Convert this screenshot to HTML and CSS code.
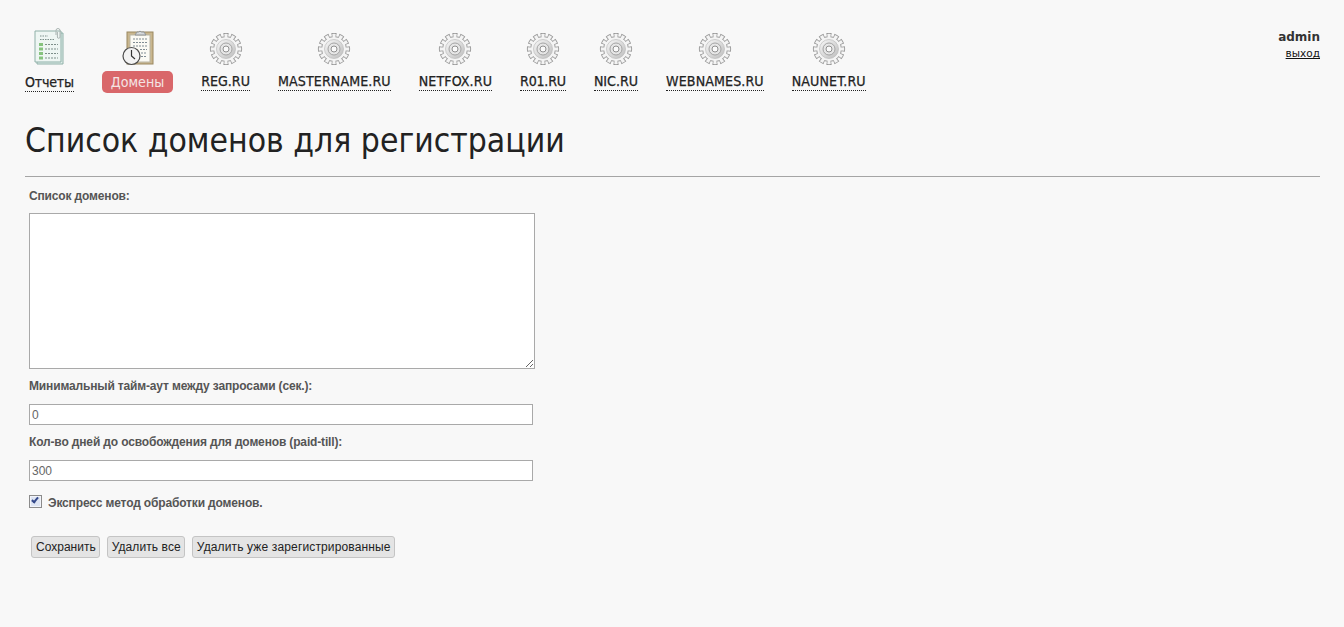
FILE: index.html
```html
<!DOCTYPE html>
<html lang="ru">
<head>
<meta charset="utf-8">
<title>Список доменов для регистрации</title>
<link rel="stylesheet" href="styles.css">
</head>
<body>
<svg class="defs" width="0" height="0" aria-hidden="true">
  <defs>
    <linearGradient id="gearFill" x1="0" y1="0" x2="1" y2="1">
      <stop offset="0" stop-color="#f8f8f8"/>
      <stop offset="1" stop-color="#bdbdbd"/>
    </linearGradient>
    <symbol id="gear" viewBox="0 0 34 34">
      <circle cx="17" cy="17" r="13" fill="none" stroke="#989898" stroke-width="6.200" stroke-dasharray="6.600 3.400" pathLength="120" stroke-dashoffset="3.300"/>
      <circle cx="17" cy="17" r="12.500" fill="#f4f4f4" stroke="#9c9c9c" stroke-width="1"/>
      <circle cx="17" cy="17" r="12.700" fill="none" stroke="#f4f4f4" stroke-width="5" stroke-dasharray="4.600 5.400" pathLength="120" stroke-dashoffset="2.300"/>
      <circle cx="17" cy="17" r="9.500" fill="url(#gearFill)" stroke="#bcbcbc" stroke-width=".7"/>
      <circle cx="17" cy="17" r="6" fill="#e6e6e6" stroke="#a4a4a4" stroke-width="1"/>
      <circle cx="17" cy="17" r="3" fill="#fafafa" stroke="#909090" stroke-width="1"/>
    </symbol>
  </defs>
</svg>

<header class="top">
  <nav class="nav">
    <a class="nav-item" href="#">
      <svg class="icon" viewBox="-2 0 34 38" aria-hidden="true">
        <path d="M3 5h26v31H3z" fill="#dfeeea" stroke="#8fb0a8"/>
        <path d="M1 3h26v31H1z" fill="#eef6f3" stroke="#8fb0a8"/>
        <path d="M6 8h8M6 11.500h14" stroke="#7d8f8a" stroke-dasharray="1.500 1"/>
        <g fill="#86c37e"><rect x="5" y="15" width="4" height="3"/><rect x="5" y="19.500" width="4" height="3"/><rect x="5" y="24" width="4" height="3"/><rect x="5" y="28.500" width="4" height="3"/></g>
        <path d="M11 16.500h13M11 21h13M11 25.500h13M11 30h13" stroke="#7d8f8a" stroke-dasharray="2 1"/>
        <path d="M22 7V2.500a2 2 0 0 1 4 0V9a1.300 1.300 0 0 1-2.600 0V4" fill="none" stroke="#a9b4b2"/>
      </svg>
      <span class="nav-label first-label">Отчеты</span>
    </a>
    <a class="nav-item active" href="#">
      <svg class="icon" viewBox="0 0 34 38" aria-hidden="true">
        <rect x="6" y="4" width="26" height="32" fill="#c9b68e" stroke="#9a8861"/>
        <rect x="9" y="7" width="20" height="27" fill="#fbfaf4" stroke="#b9b5a5"/>
        <path d="M14 7l2-3h1.500a2 2 0 0 1 3 0H23l2 3z" fill="#d5d8da" stroke="#8f9396"/>
        <path d="M12 11h14M12 14.500h14M12 18h14M19 21.500h7M20 25h6M20 28.500h6" stroke="#808c94" stroke-dasharray="2 1"/>
        <circle cx="10.500" cy="28" r="8.500" fill="#f3f3f3" stroke="#4b4b4b" stroke-width="1.200"/>
        <path d="M10.500 22v6l3.500 3" fill="none" stroke="#333" stroke-width="1.200"/>
      </svg>
      <span class="nav-label">Домены</span>
    </a>
    <a class="nav-item" href="#"><svg class="icon gear"><use href="#gear"/></svg><span class="nav-label">REG.RU</span></a>
    <a class="nav-item" href="#"><svg class="icon gear"><use href="#gear"/></svg><span class="nav-label spaced">MASTERNAME.RU</span></a>
    <a class="nav-item" href="#"><svg class="icon gear"><use href="#gear"/></svg><span class="nav-label spaced">NETFOX.RU</span></a>
    <a class="nav-item" href="#"><svg class="icon gear"><use href="#gear"/></svg><span class="nav-label tight">R01.RU</span></a>
    <a class="nav-item" href="#"><svg class="icon gear"><use href="#gear"/></svg><span class="nav-label">NIC.RU</span></a>
    <a class="nav-item" href="#"><svg class="icon gear"><use href="#gear"/></svg><span class="nav-label spaced">WEBNAMES.RU</span></a>
    <a class="nav-item" href="#"><svg class="icon gear"><use href="#gear"/></svg><span class="nav-label spaced">NAUNET.RU</span></a>
  </nav>
  <div class="user">
    <div class="user-name">admin</div>
    <a class="logout" href="#">выход</a>
  </div>
</header>

<h1 class="title">Список доменов для регистрации</h1>

<form class="form">
  <label class="label first" for="domains">Список доменов:</label>
  <textarea class="area" id="domains"></textarea>
  <label class="label" for="timeout">Минимальный тайм-аут между запросами (сек.):</label>
  <input class="field" id="timeout" type="text" value="0">
  <label class="label" for="days">Кол-во дней до освобождения для доменов (paid-till):</label>
  <input class="field" id="days" type="text" value="300">
  <label class="check">
    <input class="checkbox" type="checkbox" checked>
    <span>Экспресс метод обработки доменов.</span>
  </label>
  <div class="actions">
    <button class="btn" type="button">Сохранить</button>
    <button class="btn btn-mid" type="button">Удалить все</button>
    <button class="btn btn-wide" type="button">Удалить уже зарегистрированные</button>
  </div>
</form>
</body>
</html>
```
FILE: styles.css
```css
html, body {
  margin: 0;
  padding: 0;
  background: #f8f8f8;
  height: 100%;
}
body {
  font-family: "Liberation Sans", Arial, sans-serif;
  font-size: 12px;
  color: #222;
  padding: 0 24px 0 25px;
  box-sizing: border-box;
  overflow: hidden;
}
.defs {
  position: absolute;
}
.top {
  display: flex;
  justify-content: space-between;
  align-items: flex-start;
  padding-top: 28px;
}
.nav {
  display: flex;
  gap: 28px;
}
.nav-item {
  display: flex;
  flex-direction: column;
  align-items: center;
  color: #222;
  text-decoration: none;
}
.icon {
  width: 34px;
  height: 38px;
  display: block;
}
.gear {
  width: 34px;
  height: 34px;
  margin: 4px 0 0;
}
.nav-label {
  margin-top: 8px;
  height: 17px;
  line-height: 17px;
  font-family: "DejaVu Sans Condensed", "DejaVu Sans", sans-serif;
  font-stretch: condensed;
  font-size: 14.100px;
  font-weight: 400;
  -webkit-text-stroke: 0.25px #222;
  border-bottom: 1px dotted #222;
  white-space: nowrap;
}
.first-label {
  letter-spacing: -0.200px;
}
.spaced {
  letter-spacing: 0.100px;
}
.tight {
  letter-spacing: -0.200px;
}
.nav-item .gear + .nav-label {
  margin-top: 7px;
}
.active .nav-label {
  margin-top: 5px;
  height: 22px;
  line-height: 22px;
  padding: 0 9px;
  border-radius: 5px;
  border: 0;
  color: #f4e4e4;
  -webkit-text-stroke: 0;
  background: #d9676a;
}
.user {
  text-align: right;
  padding-top: 1px;
}
.user-name {
  font-family: "DejaVu Sans", sans-serif;
  font-weight: 700;
  font-size: 12px;
  line-height: 16px;
  color: #333;
}
.logout {
  font-family: "DejaVu Sans", sans-serif;
  font-size: 10.500px;
  line-height: 14px;
  margin-top: 1px;
  color: #111;
  display: block;
}
.title {
  margin: 27px 0 0;
  padding-bottom: 14px;
  border-bottom: 1px solid #a5a5a5;
  font-family: "DejaVu Sans Condensed", "DejaVu Sans", sans-serif;
  font-stretch: condensed;
  font-weight: 400;
  font-size: 33.400px;
  line-height: 42px;
  color: #222;
}
.form {
  display: flex;
  flex-direction: column;
  align-items: flex-start;
  padding-left: 4px;
}
.label {
  display: block;
  font-weight: 700;
  font-size: 12px;
  letter-spacing: -0.150px;
  line-height: 14px;
  color: #555;
  margin: 10px 0 11px;
}
.label.first {
  margin: 12px 0 10px;
}
.area {
  width: 506px;
  height: 156px;
  box-sizing: border-box;
  border: 1px solid #a9a9a9;
  background: #fff;
  margin: 0;
  padding: 2px;
  display: block;
}
.field {
  width: 504px;
  height: 21px;
  box-sizing: border-box;
  border: 1px solid #a9a9a9;
  background: #fff;
  color: #666;
  font-family: "Liberation Sans", Arial, sans-serif;
  font-size: 12px;
  padding: 1px 1px 1px 2px;
  margin: 0;
}
.check {
  display: flex;
  align-items: flex-start;
  gap: 6px;
  font-weight: 700;
  font-size: 12px;
  letter-spacing: -0.150px;
  color: #555;
  margin-top: 15px;
  line-height: 14px;
}
.checkbox {
  appearance: none;
  box-sizing: border-box;
  margin: -1px 0 0;
  width: 13px;
  height: 13px;
  border: 1px solid #8b8b8b;
  background: #dde4f3;
  box-shadow: inset 0 0 0 1px #f2f4fa;
  position: relative;
}
.checkbox:checked::before {
  content: "";
  position: absolute;
  left: 3px;
  top: 0;
  width: 4px;
  height: 7px;
  border: solid #33488a;
  border-width: 0 2px 2px 0;
  box-sizing: border-box;
  transform: rotate(40deg);
}
.actions {
  display: flex;
  gap: 7px;
  margin: 26px 0 0 2px;
}
.btn {
  height: 22px;
  padding: 0 3px 0 4px;
  background: #e4e4e4;
  border: 1px solid #c4c4c4;
  border-radius: 3px;
  font-family: "Liberation Sans", Arial, sans-serif;
  font-size: 12px;
  color: #222;
  white-space: nowrap;
}
.btn-mid {
  letter-spacing: 0.100px;
}
.btn-wide {
  letter-spacing: 0.140px;
}
```
